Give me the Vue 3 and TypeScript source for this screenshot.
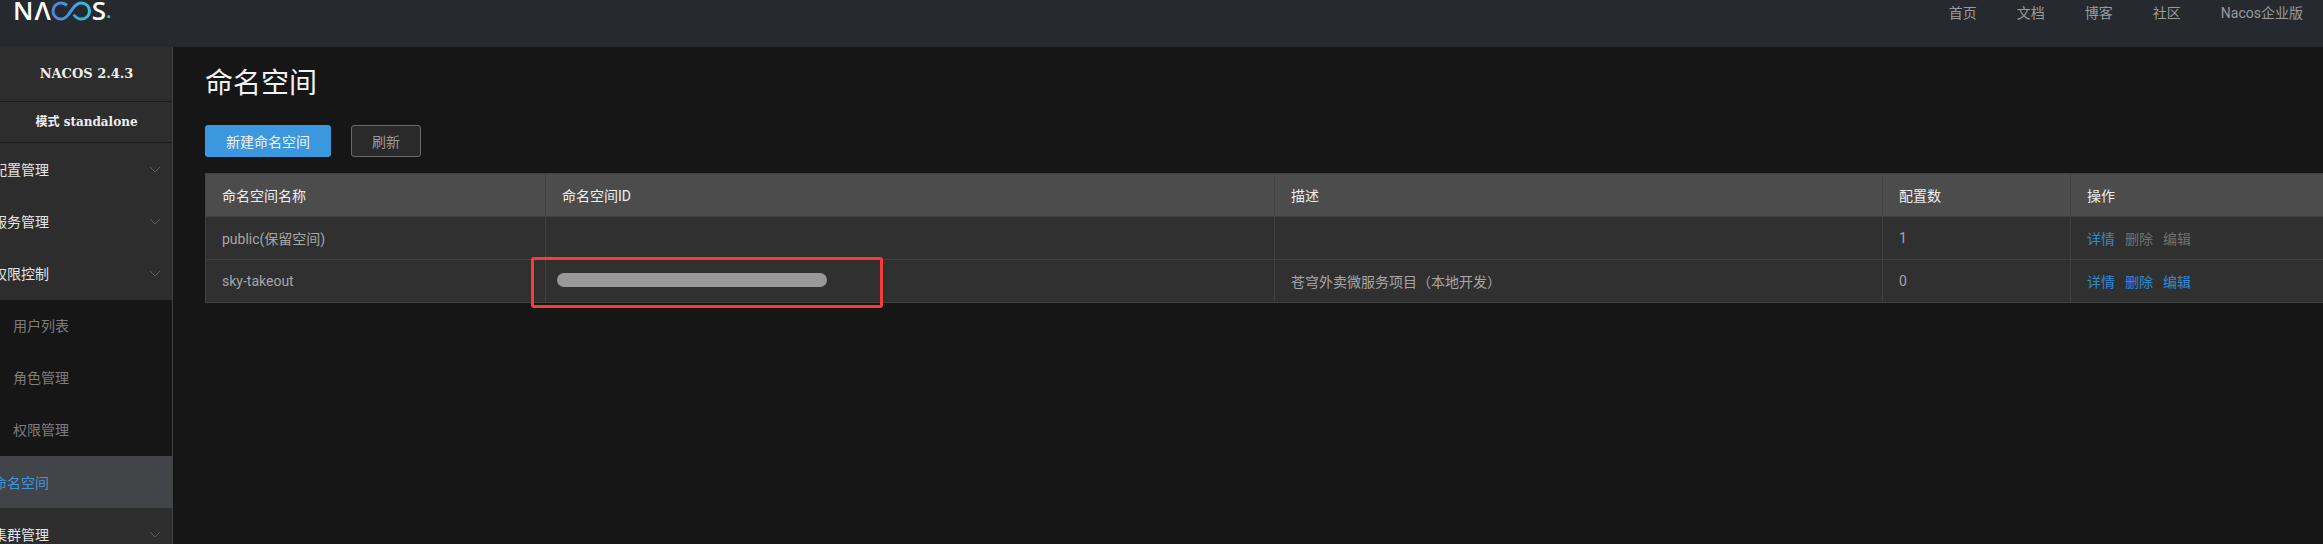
<script setup lang="ts">
interface Row { name: string; desc: string; count: number; locked: boolean }
const nav: string[] = ['首页', '文档', '博客', '社区', 'Nacos企业版']
const rows: Row[] = [
  { name: 'public(保留空间)', desc: '', count: 1, locked: true },
  { name: 'sky-takeout', desc: '苍穹外卖微服务项目（本地开发）', count: 0, locked: false },
]
</script>

<template>
  <div class="page">
    <header class="top">
      <div class="logo">
        <span>N</span><span class="lam">Λ</span>
        <svg class="inf" width="50" height="20" viewBox="0 0 50 20">
          <defs>
            <linearGradient id="g" x1="0" y1="0" x2="1" y2="0">
              <stop offset="0" stop-color="#4f86dc" />
              <stop offset="0.55" stop-color="#3f9fe0" />
              <stop offset="1" stop-color="#2fc6d8" />
            </linearGradient>
          </defs>
          <path d="M16 4.2C13.8 2.6 12 2 9.8 2 5.6 2 2 5.4 2 10s3.6 8 7.8 8c3.2 0 5.4-1.800 7.600-4.400l5.200-7.200C24.800 3.800 27 2 30.200 2 35 2 38.500 5.400 38.500 10s-3.500 8-8.300 8c-3.200 0-5.400-1.800-7.600-4.400" fill="none" stroke="url(#g)" stroke-width="3" />
        </svg>
        <span class="s">S</span><span class="dot">.</span>
      </div>
      <nav class="nav">
        <a v-for="n in nav" :key="n">{{ n }}</a>
      </nav>
    </header>

    <div class="body">
      <aside class="side">
        <div class="ver">NACOS 2.4.3</div>
        <div class="mode">模式 standalone</div>
        <div class="item"><span class="lbl">配置管理</span><svg class="chev" width="12" height="7" viewBox="0 0 12 7"><path d="M1 1l5 5 5-5" /></svg></div>
        <div class="item"><span class="lbl">服务管理</span><svg class="chev" width="12" height="7" viewBox="0 0 12 7"><path d="M1 1l5 5 5-5" /></svg></div>
        <div class="item"><span class="lbl">权限控制</span><svg class="chev" width="12" height="7" viewBox="0 0 12 7"><path d="M1 1l5 5 5-5" /></svg></div>
        <div class="subs">
          <div class="sub">用户列表</div>
          <div class="sub">角色管理</div>
          <div class="sub">权限管理</div>
        </div>
        <div class="item active"><span class="lbl">命名空间</span></div>
        <div class="item"><span class="lbl">集群管理</span><svg class="chev" width="12" height="7" viewBox="0 0 12 7"><path d="M1 1l5 5 5-5" /></svg></div>
      </aside>

      <main class="main">
        <h1 class="title">命名空间</h1>
        <div class="btns">
          <button class="btn primary">新建命名空间</button>
          <button class="btn ghost">刷新</button>
        </div>
        <div class="tablewrap">
          <table class="tbl">
            <colgroup>
              <col class="c1" /><col class="c2" /><col class="c3" /><col class="c4" /><col class="c5" />
            </colgroup>
            <thead>
              <tr><th>命名空间名称</th><th>命名空间ID</th><th>描述</th><th>配置数</th><th>操作</th></tr>
            </thead>
            <tbody>
              <tr v-for="r in rows" :key="r.name">
                <td>{{ r.name }}</td>
                <td></td>
                <td>{{ r.desc }}</td>
                <td>{{ r.count }}</td>
                <td class="ops">
                  <a class="link">详情</a>
                  <a :class="r.locked ? 'off' : 'link'">删除</a>
                  <a :class="r.locked ? 'off' : 'link'">编辑</a>
                </td>
              </tr>
            </tbody>
          </table>
          <div class="pill"></div>
          <div class="redbox"></div>
        </div>
      </main>
    </div>
  </div>
</template>

<style>
html, body { margin: 0; background: #161616; overflow: hidden; }
</style>

<style scoped>
.page {
  width: 2323px;
  height: 544px;
  overflow: hidden;
  display: flex;
  flex-direction: column;
  background: #161616;
  font-family: Roboto, "Noto Sans CJK SC", sans-serif;
  font-size: 14px;
}
.top {
  height: 47px;
  flex: none;
  background: #262a2f;
  display: flex;
  justify-content: space-between;
  align-items: flex-start;
  padding: 0 20px 0 13px;
  box-sizing: border-box;
}
.logo {
  display: flex;
  align-items: center;
  height: 21px;
  color: #fff;
  font-family: "Open Sans", sans-serif;
  font-size: 26px;
  line-height: 21px;
  font-weight: 600;
}
.lam { margin-left: 1px; }
.inf { margin-left: 0; flex: none; }
.s { margin-left: -9px; }
.dot { color: #2fc6d8; font-size: 20px; margin-left: 0; }
.nav { display: flex; gap: 40px; line-height: 26px; color: #9a9a9a; }
.body { flex: 1; display: flex; min-height: 0; }
.side {
  width: 173px;
  flex: none;
  box-sizing: border-box;
  background: #2d2d2d;
  border-right: 1px solid #414141;
}
.ver, .mode {
  font-family: "DejaVu Serif", "Noto Sans CJK SC", serif;
  font-weight: 700;
  color: #eee;
  text-align: center;
  box-sizing: border-box;
  border-bottom: 1px solid #1c1c1c;
  padding-left: 1px;
}
.ver { height: 55px; line-height: 54px; font-size: 13px; }
.mode { height: 41px; line-height: 40px; font-size: 12px; }
.item {
  height: 52px;
  display: flex;
  align-items: center;
  padding-right: 11px;
  color: #e6e6e6;
}
.lbl { margin-left: -7px; }
.chev { margin-left: auto; }
.chev path { fill: none; stroke: #5e5e5e; stroke-width: 1; }
.subs { background: #161616; margin-top: 1px; }
.sub { height: 52px; line-height: 52px; padding-left: 13px; color: #7d7d7d; }
.active { background: #434447; color: #3d96dc; }
.main { flex: 1; min-width: 0; padding: 0 0 0 32px; }
.title {
  margin: 16px 0 0;
  font-size: 28px;
  line-height: 42px;
  font-weight: 400;
  color: #f2f2f2;
}
.btns { display: flex; gap: 20px; margin-top: 20px; }
.btn {
  height: 32px;
  box-sizing: border-box;
  border-radius: 3px;
  font-family: inherit;
  font-size: 14px;
  padding: 0;
  cursor: pointer;
}
.primary { width: 126px; border: 0; background: #3b97de; color: #f2f2f2; }
.ghost { width: 70px; border: 1px solid #6a6a6a; background: #2a2a2a; color: #9a9a9a; }
.tablewrap { position: relative; margin-top: 16px; width: 2118px; }
.tbl {
  border-collapse: collapse;
  table-layout: fixed;
  width: 2118px;
  background: #303030;
  border: 1px solid #414141;
}
.c1 { width: 340px; }
.c2 { width: 729px; }
.c3 { width: 608px; }
.c4 { width: 188px; }
.c5 { width: 253px; }
th, td {
  height: 43px;
  box-sizing: border-box;
  padding: 0 16px;
  text-align: left;
  border: 1px solid #414141;
  font-weight: 400;
  white-space: nowrap;
}
th { background: #4c4c4c; color: #eee; }
td { color: #a6a6a6; }
.ops a { margin-right: 10px; }
.link { color: #2f8ad6; }
.off { color: #707070; }
.pill {
  position: absolute;
  left: 352px;
  top: 100px;
  width: 270px;
  height: 14px;
  border-radius: 7px;
  background: #999;
}
.redbox {
  position: absolute;
  left: 326px;
  top: 84px;
  width: 352px;
  height: 51px;
  box-sizing: border-box;
  border: 3px solid #fb3a3a;
  border-radius: 3px;
}
</style>
